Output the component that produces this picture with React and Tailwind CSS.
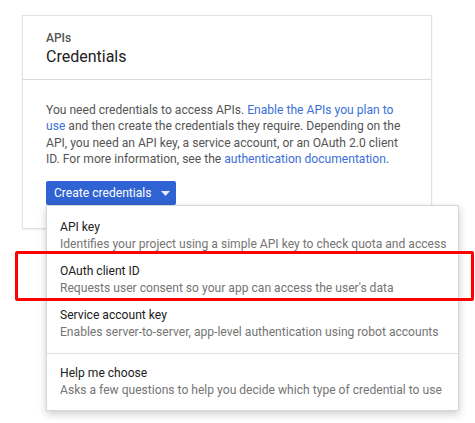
const items = [
  { title: 'API key', desc: 'Identifies your project using a simple API key to check quota and access' },
  { title: 'OAuth client ID', desc: "Requests user consent so your app can access the user's data" },
  { title: 'Service account key', desc: 'Enables server-to-server, app-level authentication using robot accounts' },
];

const MenuItem = ({ title, desc }) => (
  <li className="px-[13px] py-[5px]">
    <div className="text-[12.1px] leading-[17px] text-[#212121]">{title}</div>
    <div className="text-[12.1px] leading-[17px] text-[#757575] whitespace-nowrap">{desc}</div>
  </li>
);

export default function App() {
  return (
    <div className="relative w-[475px] h-[423px] bg-white overflow-hidden font-['Roboto',sans-serif]">
      <div className="pt-[15px] pl-[22px]">
        {/* Card */}
        <section className="w-[410px] bg-white border border-[#e2e2e2] shadow-[0_1px_2px_rgba(0,0,0,0.08)]">
          <header className="h-[64px] px-[23px] pt-[14px] border-b border-[#dadada]">
            <div className="text-[12px] leading-[16px] font-medium text-[#555]">APIs</div>
            <h1 className="text-[16px] leading-[22px] text-[#212121]">Credentials</h1>
          </header>
          <div className="px-[23px] pt-[22px] pb-[23px]">
            <p className="text-[12.1px] leading-[16.33px] text-[#555]">
              You need credentials to access APIs.{' '}
              <a className="text-[#3b6fd8]">Enable the APIs you plan to use</a> and then create the
              credentials they require. Depending on the API, you need an API key, a service account,
              or an OAuth 2.0 client ID. For more information, see the{' '}
              <a className="text-[#3b6fd8]">authentication documentation</a>.
            </p>
            <button className="mt-[14px] h-[24px] w-[130px] flex items-center gap-[9px] pl-[8px] bg-[#2f62d2] rounded-[2px] text-white text-[12.1px] whitespace-nowrap">
              <span>Create credentials</span>
              <svg width="9" height="5" viewBox="0 0 9 5">
                <path d="M0 0h9L4.5 5z" fill="#e8eefc" />
              </svg>
            </button>
          </div>
        </section>
      </div>

      {/* Dropdown menu */}
      <div className="absolute left-[46px] top-[205px] w-[413px] h-[206px] bg-white border border-[#d6d6d6] shadow-[0_3px_8px_rgba(0,0,0,0.2)]">
        <ul className="pt-[8px] pb-[7px] border-b border-[#e0e0e0]">
          {items.map((it) => (
            <MenuItem key={it.title} {...it} />
          ))}
        </ul>
        <div className="px-[13px] pt-[11px]">
          <div className="text-[12.1px] leading-[17px] text-[#212121]">Help me choose</div>
          <div className="text-[12.1px] leading-[17px] text-[#757575] whitespace-nowrap">
            Asks a few questions to help you decide which type of credential to use
          </div>
        </div>
      </div>

      {/* Highlight annotation */}
      <div className="absolute left-[15px] top-[251px] w-[459px] h-[50px] border-[3px] border-[#ff0000] rounded-[2px]" />
    </div>
  );
}
